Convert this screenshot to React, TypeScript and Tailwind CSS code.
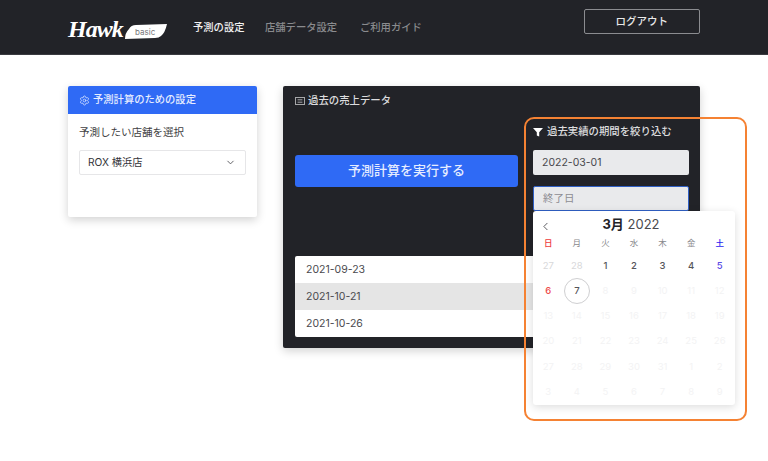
import { ChevronDown, ChevronLeft, Settings } from "lucide-react";

const font = { fontFamily: '"Inter", "Noto Sans CJK JP", sans-serif' };

const weekdays = ["日", "月", "火", "水", "木", "金", "土"];
const days = [
  27, 28, 1, 2, 3, 4, 5,
  6, 7, 8, 9, 10, 11, 12,
  13, 14, 15, 16, 17, 18, 19,
  20, 21, 22, 23, 24, 25, 26,
  27, 28, 29, 30, 31, 1, 2,
  3, 4, 5, 6, 7, 8, 9,
];

function dayClass(i: number) {
  if (i < 2) return "text-[#d8d8da]";
  if (i < 6) return "text-[#55555a] font-medium";
  if (i === 6) return "text-[#5b4ce6] font-medium";
  if (i === 7) return "text-[#ee4b4b] font-medium";
  if (i === 8) return "text-[#55555a] font-medium";
  return "text-[#f3f3f4]";
}

function Calendar() {
  return (
    <div className="absolute left-0 top-[25px] z-10 w-[202px] h-[194px] rounded-[3px] bg-white shadow-[0_2px_8px_rgba(0,0,0,0.14)] px-[1px]">
      <div className="relative h-[24px] pt-[3px] pr-[6px] text-center text-[13px] leading-[20px] text-[#4a4a4e]">
        <ChevronLeft className="absolute left-[5px] top-[9px] w-[13px] h-[13px] text-[#55555a]" strokeWidth={1.75} />
        <span className="font-bold text-[#222328]">3月</span> 2022
      </div>
      <div className="grid grid-cols-7 h-[16px] items-center text-center text-[8.5px] text-[#88888c]">
        {weekdays.map((w, i) => (
          <span key={w} className={i === 0 ? "text-[#ee3b3b] font-medium" : i === 6 ? "text-[#2a22f0] font-medium" : ""}>
            {w}
          </span>
        ))}
      </div>
      <div className="grid grid-cols-7 auto-rows-[25.3px] mt-[2px] items-center justify-items-center text-[9.5px]">
        {days.map((d, i) => (
          <span
            key={i}
            className={
              dayClass(i) +
              (i === 8 ? " flex items-center justify-center w-[26px] h-[26px] rounded-full border-[1.5px] border-[#cfcfd1] bg-white" : "")
            }
          >
            {d}
          </span>
        ))}
      </div>
    </div>
  );
}

export default function App() {
  return (
    <div className="relative w-[768px] h-[461px] overflow-hidden bg-white text-[#333338]" style={font}>
      <header className="flex items-center h-[55px] pl-[68px] bg-[#222328] border-b border-[#3a3b40]">
        <div className="flex items-center w-[125px] mt-[3px]">
          <span className="text-[24px] leading-none font-bold italic text-white tracking-[-1px]" style={{ fontFamily: '"Liberation Serif", serif' }}>
            Hawk
          </span>
          <span className="relative flex items-center justify-center ml-[1px] mt-[6px] w-[43px] h-[15px]">
            <svg className="absolute inset-0" viewBox="0 0 43 15" width="43" height="15">
              <path d="M5 5 Q7 1 12 1 L43 0 Q41 9 37 12 Q35 14 31 14 L1 15 Q1 9 5 5 Z" fill="#ffffff" />
            </svg>
            <span className="relative text-[8px] text-[#77777b] leading-none">basic</span>
          </span>
        </div>
        <nav className="flex items-center mt-[1px] text-[10.3px] font-medium">
          <span className="text-[#f2f2f2] w-[72px]">予測の設定</span>
          <span className="text-[#8a8b8e] w-[95px]">店舗データ設定</span>
          <span className="text-[#8a8b8e]">ご利用ガイド</span>
        </nav>
        <button className="ml-[162px] mb-[11px] w-[116px] h-[25px] rounded-[2px] border border-[#8b8c90] text-[10.5px] font-medium text-[#e8e8e8]">
          ログアウト
        </button>
      </header>

      <main className="flex items-start gap-[26px] pl-[68px] pt-[31px]">
        <section className="w-[189px] h-[131px] rounded-[2px] bg-white shadow-[0_3px_10px_rgba(0,0,0,0.18)]">
          <div className="flex items-center gap-[3px] h-[28px] px-[11px] rounded-t-[2px] bg-[#2f6af5] text-[10.3px] font-medium text-[#e6edff]">
            <Settings className="w-[11px] h-[11px]" strokeWidth={1.5} />
            予測計算のための設定
          </div>
          <div className="px-[11px] pt-[11px]">
            <p className="text-[10.5px] leading-[15px] text-[#3f3f43]">予測したい店舗を選択</p>
            <div className="flex items-center justify-between mt-[10px] h-[25px] pl-[8px] pr-[9px] rounded-[2px] border border-[#e6e6e8] text-[10.2px] text-[#333338]">
              ROX 横浜店
              <ChevronDown className="w-[11px] h-[11px] text-[#55555a]" strokeWidth={2} />
            </div>
          </div>
        </section>

        <section className="w-[417px] h-[262px] rounded-[2px] bg-[#222328] shadow-[0_3px_10px_rgba(0,0,0,0.18)] pl-[12px] pr-[11px]">
          <div className="flex items-center gap-[3px] h-[29px] text-[10.4px] font-medium text-[#dcdcde]">
            <svg viewBox="0 0 12 10" width="10" height="8" fill="none" stroke="#c8c8ca" strokeWidth="1">
              <rect x="0.5" y="0.5" width="11" height="9" />
              <path d="M3 3.5h6M3 6.5h6" />
            </svg>
            過去の売上データ
          </div>
          <div className="flex gap-[15px] h-[141px]">
            <div className="w-[223px] pt-[40px]">
              <button className="w-full h-[32px] rounded-[3px] bg-[#2f6af5] text-[13px] font-medium text-[#e6edff]">
                予測計算を実行する
              </button>
            </div>
            <div className="w-[156px] pt-[10px]">
              <div className="flex items-center gap-[4px] h-[14px] text-[10.4px] font-medium whitespace-nowrap text-[#dcdcde]">
                <svg viewBox="0 0 10 10" width="10" height="10" fill="#ffffff">
                  <path d="M0 1h10L6.2 5.2V9.5L3.8 8.4V5.2Z" />
                </svg>
                過去実績の期間を絞り込む
              </div>
              <div className="flex items-center mt-[11px] h-[25px] pl-[9px] rounded-[2px] bg-[#e9eaec] text-[10.5px] text-[#48484c]">
                2022-03-01
              </div>
              <div className="relative mt-[11px]">
                <div className="flex items-center h-[25px] pl-[9px] rounded-[2px] bg-[#e9eaec] border-[1.5px] border-[#2f5fc4] text-[10.5px] text-[#8d8d92]">
                  終了日
                </div>
                <Calendar />
              </div>
            </div>
          </div>
          <div className="h-[81px] w-[394px] rounded-[2px] overflow-hidden bg-white text-[10.5px] text-[#4a4a4e]">
            <div className="flex items-center h-[27px] pl-[11px]">2021-09-23</div>
            <div className="flex items-center h-[27px] pl-[11px] bg-[#e5e5e5]">2021-10-21</div>
            <div className="flex items-center h-[27px] pl-[11px]">2021-10-26</div>
          </div>
        </section>
      </main>

      <div className="absolute left-[524px] top-[117px] z-20 w-[223px] h-[304px] rounded-[10px] border-2 border-[#f58233] pointer-events-none" />
    </div>
  );
}
